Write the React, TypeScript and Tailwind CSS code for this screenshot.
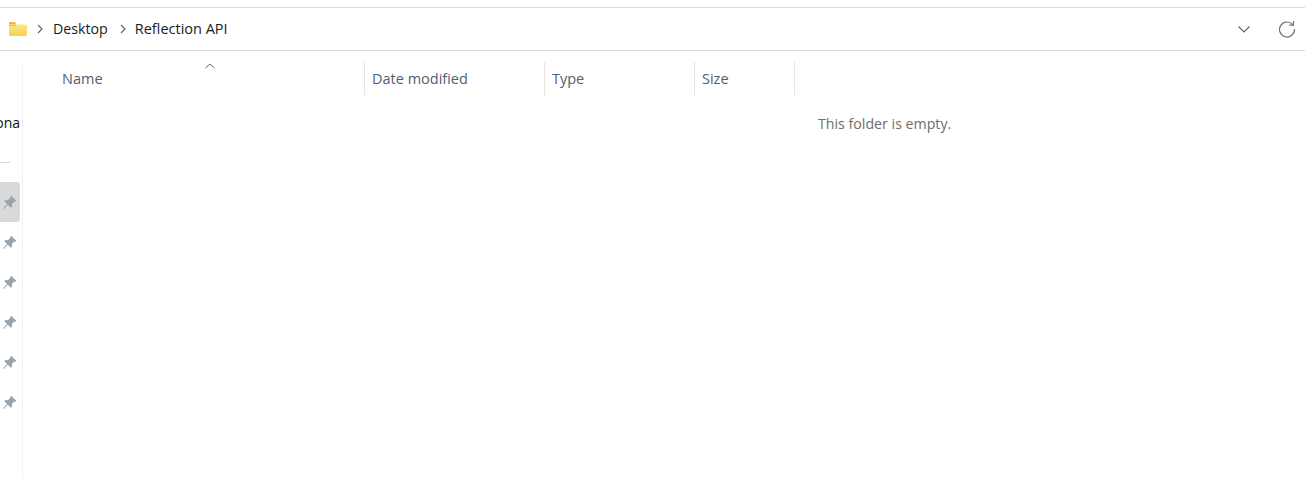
import React from "react";

const FONT = "font-['Open_Sans','Noto_Sans',sans-serif]";

const PinIcon = () => (
  <svg width="17" height="17" viewBox="0 0 16 16" className="fill-[#98a3ab]">
    <path d="M9.600 1.600 14.400 6.400 13.500 7.300 12.600 7 10.200 9.400 10.400 12 9.300 13 6.400 10.100 2.600 14 2 13.400 5.800 9.500 3 6.700 4 5.600 6.600 5.800 9 3.400 8.700 2.500Z" />
  </svg>
);

const ChevronRight = () => (
  <svg width="8" height="10" viewBox="0 0 8 10" fill="none" className="stroke-[#6b6b6b]">
    <path d="M2 1l4 4-4 4" strokeWidth="1.300" />
  </svg>
);

const FolderIcon = () => (
  <svg width="18" height="14" viewBox="0 0 18 14">
    <defs>
      <linearGradient id="folderBody" x1="0" y1="0" x2="0" y2="1">
        <stop offset="0" stopColor="#fde78a" />
        <stop offset="1" stopColor="#f9cf4f" />
      </linearGradient>
    </defs>
    <path d="M0 1.200C0 .5.500 0 1.200 0h4.300l2 2H0Z" fill="#f5b31f" />
    <path d="M0 2.500h16.800c.7 0 1.200.5 1.200 1.200v9.100c0 .7-.5 1.200-1.200 1.200H1.200C.5 14 0 13.500 0 12.800Z" fill="url(#folderBody)" />
    <path d="M0 2.500h7.500l-1.200 1.300H0Z" fill="#f2b01e" />
  </svg>
);

const columns = [
  { label: "Name", width: "w-[316px]", pad: "pl-[13px]", sort: true },
  { label: "Date modified", width: "w-[180px]", pad: "pl-[7px]", sort: false },
  { label: "Type", width: "w-[150px]", pad: "pl-[7px]", sort: false },
  { label: "Size", width: "w-[100px]", pad: "pl-[7px]", sort: false },
];

const App = () => {
  return (
    <div className={`flex h-[478px] w-[1305px] flex-col overflow-hidden bg-white ${FONT}`}>
      <div className="mt-[7px] flex h-[44px] flex-none items-center border-y border-[#d9d9d9] px-[9px] text-[14.2px] text-[#1a1a1a]">
        <FolderIcon />
        <span className="ml-[9px]"><ChevronRight /></span>
        <span className="ml-[9px]">Desktop</span>
        <span className="ml-[11px]"><ChevronRight /></span>
        <span className="ml-[8px] text-[14.500px]">Reflection API</span>
        <svg width="16" height="16" viewBox="0 0 16 16" fill="none" className="ml-auto stroke-[#666666]">
          <path d="M2.500 5.500 8 11l5.500-5.500" strokeWidth="1.200" />
        </svg>
        <svg width="18" height="18" viewBox="0 0 18 18" fill="none" className="ml-[26px] stroke-[#707070]">
          <path d="M14.700 4.600A7.500 7.500 0 1 0 16.500 9" strokeWidth="1.200" />
          <path d="M15.500 1v4.200h-4.200" strokeWidth="1.200" />
        </svg>
      </div>

      <div className="flex min-h-0 flex-1">
        <aside className="mt-[11px] flex w-[23px] flex-none flex-col border-r border-[#f0f0f0] text-[14px] text-[#111111]">
          <div className="mt-[50px] flex h-[22px] justify-end overflow-hidden pr-[2px] leading-[22px]">ona</div>
          <div className="mt-[28px] h-px w-[10px] bg-[#d9d9d9]" />
          <div className="mt-[19px] flex h-[40px] w-[20px] items-center justify-end rounded-r-[3px] bg-[#d9d9d9] pr-[2px]"><PinIcon /></div>
          {[0, 1, 2, 3, 4].map((i) => (
            <div key={i} className="flex h-[40px] w-[20px] items-center justify-end pr-[2px]"><PinIcon /></div>
          ))}
        </aside>

        <main className="flex-1">
          <div className="mt-[11px] flex h-[33px] pl-[26px] text-[14.500px] text-[#4f6073]">
            {columns.map((col) => (
              <div key={col.label} className={`relative flex items-center border-r border-[#e5e5e5] ${col.width} ${col.pad}`}>
                {col.label}
                {col.sort ? (
                  <svg width="10" height="6" viewBox="0 0 10 6" fill="none" className="absolute left-[156px] top-[1px] stroke-[#6b6b6b]">
                    <path d="M.5 5 5 1l4.500 4" strokeWidth="1" />
                  </svg>
                ) : null}
              </div>
            ))}
          </div>
          <div className="mt-[18px] pl-[795px] text-[14.200px] leading-[22px] text-[#6d6d6d]">This folder is empty.</div>
        </main>
      </div>
    </div>
  );
};

export default App;
